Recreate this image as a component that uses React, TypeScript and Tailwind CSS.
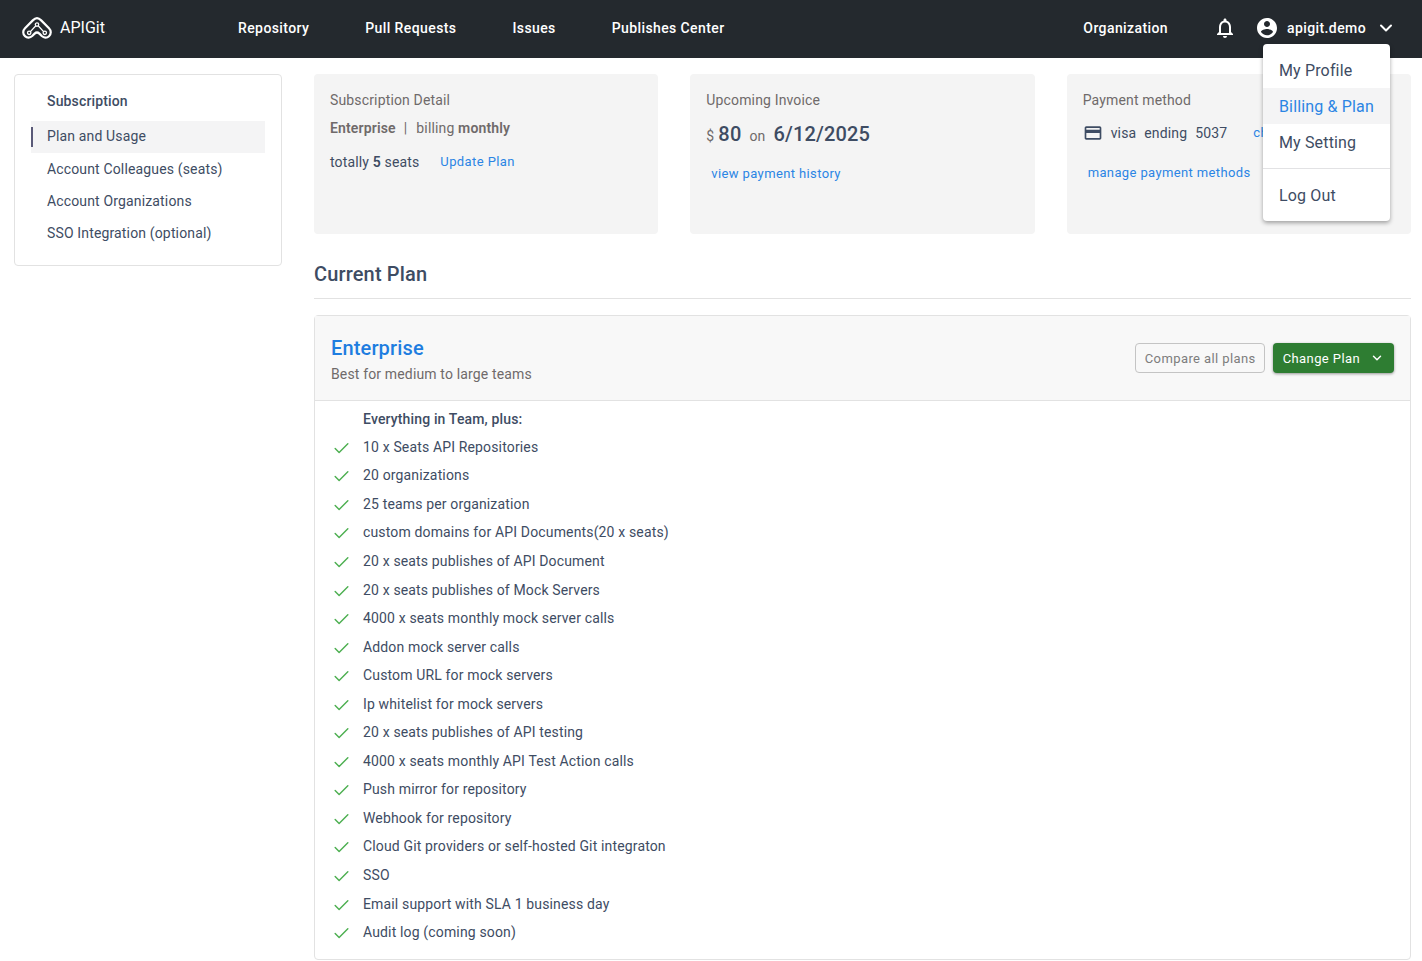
import { Check, ChevronDown } from "lucide-react";

const NAV_ITEMS = ["Repository", "Pull Requests", "Issues", "Publishes Center"];

const SIDE_ITEMS = [
  "Plan and Usage",
  "Account Colleagues (seats)",
  "Account Organizations",
  "SSO Integration (optional)",
];

const FEATURES = [
  "10 x Seats API Repositories",
  "20 organizations",
  "25 teams per organization",
  "custom domains for API Documents(20 x seats)",
  "20 x seats publishes of API Document",
  "20 x seats publishes of Mock Servers",
  "4000 x seats monthly mock server calls",
  "Addon mock server calls",
  "Custom URL for mock servers",
  "Ip whitelist for mock servers",
  "20 x seats publishes of API testing",
  "4000 x seats monthly API Test Action calls",
  "Push mirror for repository",
  "Webhook for repository",
  "Cloud Git providers or self-hosted Git integraton",
  "SSO",
  "Email support with SLA 1 business day",
  "Audit log (coming soon)",
];

function Logo() {
  return (
    <svg viewBox="0 0 30 22" className="h-[22px] w-[30px]" fill="none" stroke="white" strokeLinejoin="round" strokeLinecap="round">
      <path
        d="M15 1.2 C13.2 1.2 12 2.2 10.8 3.4 L3 11.2 C0.6 13.6 0.7 17.2 3 19.2 C5.2 21.2 8.2 20.9 10.2 19 L12.6 16.6 C14 15.3 16 15.3 17.4 16.6 L19.8 19 C21.8 20.9 24.8 21.2 27 19.2 C29.3 17.2 29.4 13.6 27 11.2 L19.2 3.4 C18 2.2 16.8 1.2 15 1.2 Z"
        strokeWidth="2.2"
      />
      <path d="M8.4 14.6 L13.6 9 M16.4 9 L21.6 14.6" strokeWidth="1.3" />
      <circle cx="15" cy="7.6" r="1.7" strokeWidth="1.3" />
      <circle cx="7.2" cy="15.8" r="1.7" strokeWidth="1.3" />
      <circle cx="22.8" cy="15.8" r="1.7" strokeWidth="1.3" />
    </svg>
  );
}

function BellIcon() {
  return (
    <svg viewBox="0 0 24 24" className="h-6 w-6" fill="white">
      <path d="M12 22c1.1 0 2-.9 2-2h-4c0 1.1.89 2 2 2zm6-6v-5c0-3.07-1.64-5.64-4.5-6.32V4c0-.83-.67-1.5-1.5-1.5s-1.5.67-1.5 1.5v.68C7.63 5.36 6 7.92 6 11v5l-2 2v1h16v-1l-2-2zm-2 1H8v-6c0-2.48 1.51-4.5 4-4.5s4 2.02 4 4.5v6z" />
    </svg>
  );
}

function UserIcon() {
  return (
    <svg viewBox="0 0 24 24" className="h-6 w-6" fill="white">
      <path d="M12 2C6.48 2 2 6.48 2 12s4.48 10 10 10 10-4.48 10-10S17.52 2 12 2zm0 3c1.66 0 3 1.34 3 3s-1.34 3-3 3-3-1.34-3-3 1.34-3 3-3zm0 14.2c-2.5 0-4.71-1.28-6-3.22.03-1.99 4-3.08 6-3.08 1.99 0 5.97 1.09 6 3.08-1.29 1.94-3.5 3.22-6 3.22z" />
    </svg>
  );
}

function CardIcon() {
  return (
    <svg viewBox="0 0 24 24" className="h-5 w-5" fill="#3e4c63">
      <path d="M20 4H4c-1.11 0-1.99.89-1.99 2L2 18c0 1.11.89 2 2 2h16c1.11 0 2-.89 2-2V6c0-1.11-.89-2-2-2zm0 14H4v-6h16v6zm0-10H4V6h16v2z" />
    </svg>
  );
}

function Header() {
  return (
    <header className="flex h-[58px] items-center bg-[#24292e] pb-0.5 text-white">
      <div className="flex w-[238px] items-center pl-[22px]">
        <Logo />
        <span className="ml-2 text-base tracking-normal">APIGit</span>
      </div>
      <nav className="flex flex-1 items-center gap-[56px] text-sm font-medium tracking-[0.4px]">
        {NAV_ITEMS.map((item) => (
          <span key={item}>{item}</span>
        ))}
      </nav>
      <div className="flex items-center pr-[26px]">
        <span className="text-sm font-medium tracking-[0.4px]">Organization</span>
        <span className="ml-[45px]"><BellIcon /></span>
        <span className="ml-[18px]"><UserIcon /></span>
        <span className="ml-2 text-sm font-medium tracking-[0.4px]">apigit.demo</span>
        <ChevronDown className="ml-[10px] h-5 w-5" strokeWidth={2.4} />
      </div>
    </header>
  );
}

function UserMenu() {
  return (
    <div className="absolute left-[1263px] top-[44px] z-10 w-[127px] rounded bg-white py-2 text-base text-[#3e4c63] shadow-[0_2px_4px_rgba(0,0,0,0.35)]">
      <div className="flex h-9 items-center px-4 pt-0.5">My Profile</div>
      <div className="flex h-9 items-center bg-[#f4f4f5] px-4 pt-0.5 text-[#2b85e4]">Billing &amp; Plan</div>
      <div className="flex h-9 items-center px-4 pt-0.5">My Setting</div>
      <div className="mt-2 border-t border-[#e2e2e4] pt-2">
        <div className="flex h-9 items-center px-4 pt-0.5">Log Out</div>
      </div>
    </div>
  );
}

function Sidebar() {
  return (
    <aside className="h-[192px] w-[268px] shrink-0 rounded-sm border border-[#e2e2e2] px-4 pt-4 text-sm text-[#3e4c63]">
      <div className="pl-4 font-medium leading-5">Subscription</div>
      <div className="mt-[10px]">
        {SIDE_ITEMS.map((item, index) => (
          <div
            key={item}
            className={`relative flex h-8 items-center pb-0.5 pl-4 ${index === 0 ? "mb-px bg-[#f4f4f5]" : ""}`}
          >
            {index === 0 && <span className="absolute left-0 top-[6px] h-5 w-0.5 bg-[#5a5a78]" />}
            {item}
          </div>
        ))}
      </div>
    </aside>
  );
}

function SubscriptionCard() {
  return (
    <div className="h-40 flex-1 rounded bg-[#f4f4f4] px-4 pt-4 text-sm">
      <div className="leading-5 text-[#6f6a6a]">Subscription Detail</div>
      <div className="mt-2 leading-5 text-[#6f6a6a]">
        <b className="font-semibold">Enterprise</b>
        <span className="ml-2 mr-[9px]">|</span>billing <b className="font-semibold">monthly</b>
      </div>
      <div className="mt-[13px] flex items-center leading-5 text-[#3e4c63]">
        <span>totally <b className="font-semibold">5</b> seats</span>
        <span className="ml-[21px] mt-px text-[13px] tracking-[0.4px] text-[#2b85e4]">Update Plan</span>
      </div>
    </div>
  );
}

function InvoiceCard() {
  return (
    <div className="h-40 flex-1 rounded bg-[#f4f4f4] px-4 pt-4 text-sm">
      <div className="leading-5 text-[#6f6a6a]">Upcoming Invoice</div>
      <div className="mt-2.5 flex items-baseline text-[#3e4c63]">
        <span className="text-[#6f6a6a]">$</span>
        <span className="ml-1 text-xl font-medium">80</span>
        <span className="ml-2 text-[#6f6a6a]">on</span>
        <span className="ml-2 text-xl font-medium">6/12/2025</span>
      </div>
      <div className="ml-[5px] mt-4 text-[13px] leading-5 tracking-[0.38px] text-[#2b85e4]">view payment history</div>
    </div>
  );
}

function PaymentCard() {
  return (
    <div className="h-40 flex-1 overflow-hidden rounded bg-[#f4f4f4] px-4 pt-4 text-sm">
      <div className="leading-5 text-[#6f6a6a]">Payment method</div>
      <div className="mt-[13px] flex items-center whitespace-nowrap leading-5 text-[#3e4c63]">
        <CardIcon />
        <span className="ml-2">visa</span>
        <span className="ml-2">ending</span>
        <span className="ml-2">5037</span>
        <span className="ml-[26px] text-[13px] tracking-[0.4px] text-[#2b85e4]">change</span>
      </div>
      <div className="ml-[5px] mt-5 text-[13px] leading-5 tracking-[0.37px] text-[#2b85e4]">manage payment methods</div>
    </div>
  );
}

function PlanPanel() {
  return (
    <section className="mt-4 h-[645px] rounded-sm border border-[#e2e2e2] text-sm text-[#3e4c63]">
      <div className="flex h-[85px] items-center justify-between border-b border-[#e2e2e2] bg-[#f8f8f8] px-4">
        <div className="self-start pt-[18px]">
          <div className="text-xl font-medium leading-7 text-[#1e7de0]">Enterprise</div>
          <div className="mt-0.5 leading-5 text-[#6f6a6a]">Best for medium to large teams</div>
        </div>
        <div className="flex items-center gap-2">
          <button type="button" className="h-[30px] w-[130px] rounded border border-[#c4c4c4] pl-px pt-0.5 text-[13px] tracking-[0.4px] text-[#7d7d7d]">
            Compare all plans
          </button>
          <button type="button" className="flex h-[30px] items-center rounded bg-[#2e7d32] px-[10px] pt-0.5 text-[13px] tracking-[0.4px] text-white shadow-[0_1px_3px_rgba(0,0,0,0.4)]">
            Change Plan
            <ChevronDown className="-mt-0.5 ml-[10px] h-[14px] w-[14px]" strokeWidth={2.5} />
          </button>
        </div>
      </div>
      <div className="pl-4 pt-2">
        <div className="pl-8 font-medium leading-5">Everything in Team, plus:</div>
        <ul className="mt-[3.56px]">
          {FEATURES.map((feature) => (
            <li key={feature} className="flex h-[28.56px] items-center">
              <Check className="ml-px mt-[3px] h-[19px] w-[19px] text-[#4caf50]" strokeWidth={1.8} />
              <span className="ml-3">{feature}</span>
            </li>
          ))}
        </ul>
      </div>
    </section>
  );
}

export default function App() {
  return (
    <div className="relative h-[961px] overflow-hidden bg-white font-['Roboto',sans-serif] tracking-[0.15px]">
      <Header />
      <UserMenu />
      <main className="flex pl-[14px] pr-[11px] pt-4">
        <Sidebar />
        <div className="ml-8 min-w-0 flex-1">
          <div className="flex gap-8">
            <SubscriptionCard />
            <InvoiceCard />
            <PaymentCard />
          </div>
          <h2 className="mt-[27px] border-b border-[#e2e2e2] pb-[10px] text-xl font-medium leading-[27px] text-[#3e4c63]">
            Current Plan
          </h2>
          <PlanPanel />
        </div>
      </main>
    </div>
  );
}
